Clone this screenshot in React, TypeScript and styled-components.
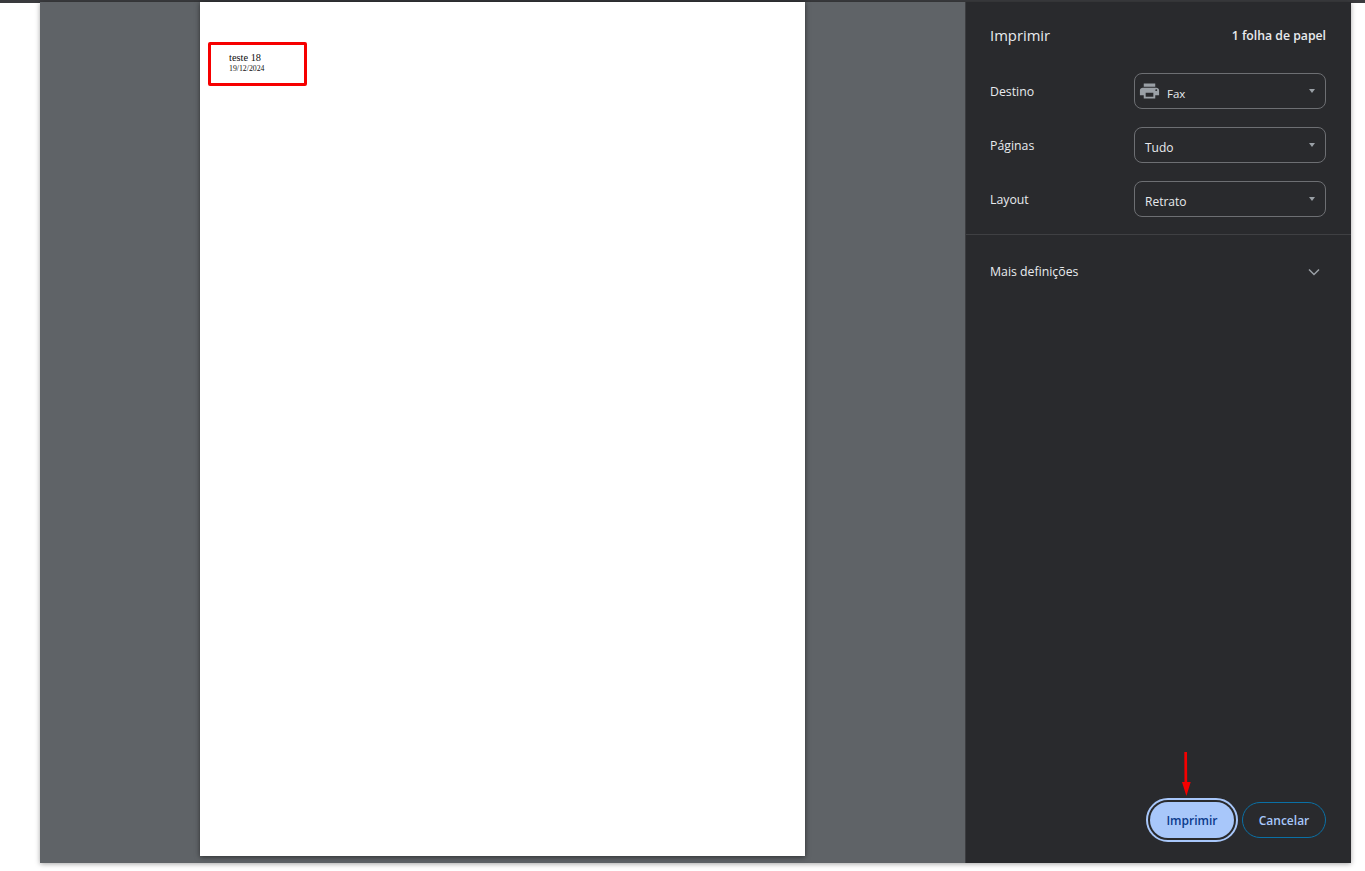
import styled, { createGlobalStyle } from "styled-components";

const GlobalStyle = createGlobalStyle`
  html, body {
    margin: 0;
    padding: 0;
    background: #fff;
    overflow: hidden;
  }
  body {
    font-family: "Open Sans", "Noto Sans", sans-serif;
  }
`;

const Screen = styled.div`
  position: relative;
  width: 1365px;
  height: 871px;
  background: #fff;
  padding-left: 40px;
  box-sizing: border-box;
  border-top: 3px solid #3a3b3e;
`;

const Dialog = styled.div`
  display: flex;
  width: 1311px;
  height: 861px;
  margin-top: -1px;
  box-shadow: 0 1px 5px rgba(0, 0, 0, 0.35);
`;

const Preview = styled.div`
  flex: 0 0 925px;
  background: #5f6367;
  display: flex;
  justify-content: flex-start;
  padding-left: 160px;
  box-sizing: border-box;
`;

const Sheet = styled.div`
  position: relative;
  width: 605px;
  height: 854px;
  background: #fff;
  box-shadow: 0 1px 5px rgba(0, 0, 0, 0.55);
  font-family: "Liberation Serif", serif;
  color: #111;
  padding: 50px 0 0 29px;
  box-sizing: border-box;
`;

const SheetTitle = styled.div`
  font-size: 10.4px;
  line-height: 12px;
`;

const SheetDate = styled.div`
  font-size: 7.8px;
  line-height: 10px;
`;

const RedBox = styled.div`
  position: absolute;
  left: 8px;
  top: 40px;
  width: 99px;
  height: 44px;
  border: 3px solid #f60000;
  border-radius: 2px;
  box-sizing: border-box;
`;

const Sidebar = styled.aside`
  flex: 1;
  background: #292a2d;
  color: #e8eaed;
  display: flex;
  flex-direction: column;
  border-left: 1px solid #3c3d40;
  box-sizing: border-box;
`;

const Header = styled.div`
  display: flex;
  justify-content: space-between;
  align-items: center;
  padding: 21px 25px 0 24px;
  height: 24px;
`;

const Title = styled.h1`
  margin: 0;
  font-size: 14.8px;
  font-weight: 400;
  color: #e8eaed;
`;

const SheetCount = styled.div`
  font-size: 12.25px;
  font-weight: 600;
  color: #e8eaed;
`;

const Settings = styled.div`
  display: flex;
  flex-direction: column;
  gap: 18px;
  padding: 26px 25px 17px 24px;
  border-bottom: 1px solid #3f4043;
`;

const Row = styled.div`
  display: flex;
  align-items: center;
  justify-content: space-between;
`;

const Label = styled.div`
  font-size: 12.3px;
  color: #e8eaed;
`;

const SelectBox = styled.div<{ $icon?: boolean }>`
  position: relative;
  width: 192px;
  height: 36px;
  box-sizing: border-box;
  border: 1px solid #6d6f73;
  border-radius: 8px;
  display: flex;
  align-items: center;
  gap: 6px;
  padding: 5px 0 0 ${(p) => (p.$icon ? "3px" : "10px")};
  font-size: ${(p) => (p.$icon ? "11.5px" : "12px")};
  color: #e8eaed;
`;

const Caret = styled.span`
  position: absolute;
  right: 10px;
  top: 15px;
  border-left: 3.5px solid transparent;
  border-right: 3.5px solid transparent;
  border-top: 4px solid #9aa0a6;
`;

const PrinterIcon = styled.svg`
  width: 23px;
  height: 20px;
  fill: #9aa0a6;
  margin-top: -6px;
`;

const More = styled.div`
  display: flex;
  align-items: center;
  justify-content: space-between;
  padding: 28px 31px 0 24px;
  font-size: 12.3px;
  color: #e8eaed;
`;

const Chevron = styled.svg`
  width: 12px;
  height: 8px;
  fill: none;
  stroke: #9aa0a6;
  stroke-width: 1.5;
`;

const Footer = styled.div`
  margin-top: auto;
  display: flex;
  justify-content: flex-end;
  align-items: center;
  gap: 4px;
  padding: 0 25px 21px 0;
`;

const PrintButton = styled.button`
  width: 84px;
  height: 36px;
  margin: 4px;
  border: none;
  border-radius: 18px;
  background: #a8c7fa;
  color: #0b3a8c;
  font: 600 12px "Open Sans", sans-serif;
  outline: 2px solid #a8c7fa;
  outline-offset: 2px;
`;

const CancelButton = styled.button`
  width: 84px;
  height: 36px;
  border: 1px solid #0a70a5;
  border-radius: 18px;
  background: transparent;
  color: #a8c7fa;
  font: 600 12px "Open Sans", sans-serif;
`;

const Arrow = styled.svg`
  position: absolute;
  left: 1179px;
  top: 747px;
  width: 14px;
  height: 46px;
`;

export default function App() {
  return (
    <>
      <GlobalStyle />
      <Screen>
        <Dialog>
          <Preview>
            <Sheet>
              <SheetTitle>teste 18</SheetTitle>
              <SheetDate>19/12/2024</SheetDate>
              <RedBox />
            </Sheet>
          </Preview>
          <Sidebar>
            <Header>
              <Title>Imprimir</Title>
              <SheetCount>1 folha de papel</SheetCount>
            </Header>
            <Settings>
              <Row>
                <Label>Destino</Label>
                <SelectBox $icon>
                  <PrinterIcon viewBox="0 0 24 24" preserveAspectRatio="none">
                    <path d="M19 8H5c-1.66 0-3 1.34-3 3v6h4v4h12v-4h4v-6c0-1.66-1.34-3-3-3zm-3 11H8v-5h8v5zm3-7c-.55 0-1-.45-1-1s.45-1 1-1 1 .45 1 1-.45 1-1 1zm-1-9H6v4h12V3z" />
                  </PrinterIcon>
                  Fax
                  <Caret />
                </SelectBox>
              </Row>
              <Row>
                <Label>Páginas</Label>
                <SelectBox>
                  Tudo
                  <Caret />
                </SelectBox>
              </Row>
              <Row>
                <Label>Layout</Label>
                <SelectBox>
                  Retrato
                  <Caret />
                </SelectBox>
              </Row>
            </Settings>
            <More>
              Mais definições
              <Chevron viewBox="0 0 12 8">
                <path d="M1 1.5l5 5 5-5" />
              </Chevron>
            </More>
            <Footer>
              <PrintButton>Imprimir</PrintButton>
              <CancelButton>Cancelar</CancelButton>
            </Footer>
          </Sidebar>
        </Dialog>
        <Arrow viewBox="0 0 14 46">
          <path d="M5.3 2H8l.2 30h3.5L7.4 46 3 32h2.5z" fill="#f40000" />
        </Arrow>
      </Screen>
    </>
  );
}
